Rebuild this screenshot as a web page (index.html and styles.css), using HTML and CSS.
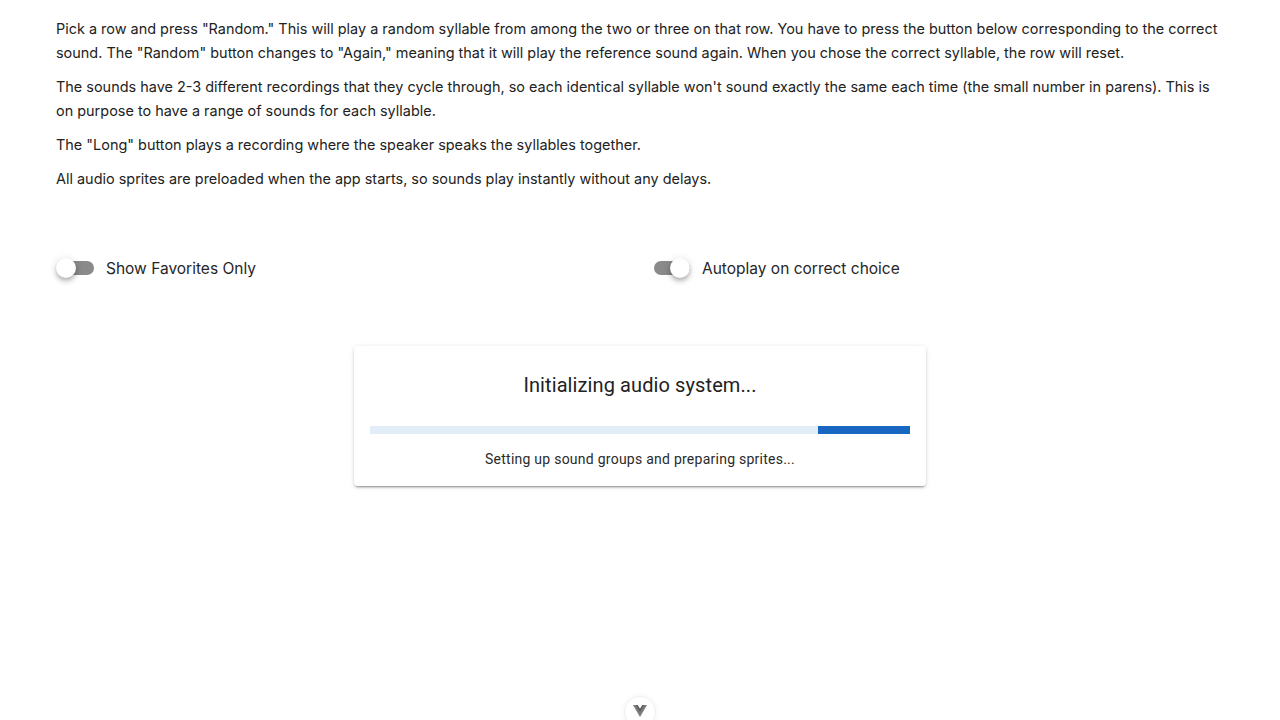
FILE: index.html
```html
<!DOCTYPE html>
<html lang="en">
<head>
<meta charset="utf-8">
<title>Syllables</title>
<link rel="stylesheet" href="styles.css">
</head>
<body>
<main class="page">
  <section class="intro">
    <p>Pick a row and press "Random." This will play a random syllable from among the two or three on that row. You have to press the button below corresponding to the correct sound. The "Random" button changes to "Again," meaning that it will play the reference sound again. When you chose the correct syllable, the row will reset.</p>
    <p>The sounds have 2-3 different recordings that they cycle through, so each identical syllable won't sound exactly the same each time (the small number in parens). This is on purpose to have a range of sounds for each syllable.</p>
    <p>The "Long" button plays a recording where the speaker speaks the syllables together.</p>
    <p>All audio sprites are preloaded when the app starts, so sounds play instantly without any delays.</p>
  </section>

  <section class="toggles">
    <label class="switch">
      <span class="switch-control"><span class="track"></span><span class="thumb"></span></span>
      <span class="switch-label">Show Favorites Only</span>
    </label>
    <label class="switch switch-on second">
      <span class="switch-control"><span class="track"></span><span class="thumb"></span></span>
      <span class="switch-label">Autoplay on correct choice</span>
    </label>
  </section>

  <section class="loader-card">
    <h2 class="loader-title">Initializing audio system...</h2>
    <div class="progress"><div class="progress-fill"></div></div>
    <p class="loader-sub">Setting up sound groups and preparing sprites...</p>
  </section>
</main>

<button class="devtools" type="button" aria-label="Vue devtools">
  <svg width="14" height="12" viewBox="0 0 14 12">
    <path d="M0 0 L4.6 0 L7 4 L9.4 0 L14 0 L7 12 Z" fill="#7c7c7c"/>
    <path d="M3 0 L4.6 0 L7 4 L9.4 0 L11 0 L7 7 Z" fill="#5a5a5a"/>
  </svg>
</button>
</body>
</html>
```

FILE: styles.css
```css
html, body {
  margin: 0;
  padding: 0;
  background: #ffffff;
}

body {
  font-family: Inter, "Noto Sans", "Liberation Sans", sans-serif;
  color: #222222;
  overflow: hidden;
  height: 720px;
}

.page {
  padding: 17px 56px 0;
}

.intro p {
  margin: 0 0 10px;
  font-size: 14.45px;
  line-height: 24px;
}

.toggles {
  display: grid;
  grid-template-columns: 1fr 1fr;
  margin-top: 57px;
  height: 40px;
  align-items: center;
}

.switch {
  display: flex;
  align-items: center;
}

.switch.second {
  padding-left: 12px;
}

.switch-control {
  position: relative;
  width: 38px;
  height: 20px;
  flex: none;
}

.track {
  position: absolute;
  left: 2px;
  right: 0;
  top: 3px;
  height: 14px;
  border-radius: 7px;
  background: #8a8a8a;
}

.thumb {
  position: absolute;
  top: 0;
  left: 0;
  width: 20px;
  height: 20px;
  border-radius: 50%;
  background: #ffffff;
  box-shadow: 0 2px 4px -1px rgba(0,0,0,0.2), 0 4px 5px rgba(0,0,0,0.14), 0 1px 10px rgba(0,0,0,0.12);
}

.switch-on .thumb {
  left: 18px;
}

.switch-label {
  margin-left: 12px;
  font-size: 15.5px;
  color: #262626;
}

.loader-card {
  width: 572px;
  box-sizing: border-box;
  margin: 58px auto 0;
  padding: 25px 16px 17px;
  background: #ffffff;
  border-radius: 4px;
  box-shadow: 0 3px 1px -2px rgba(0,0,0,0.2), 0 2px 2px rgba(0,0,0,0.14), 0 1px 5px rgba(0,0,0,0.12);
  text-align: center;
  font-family: Roboto, "Liberation Sans", sans-serif;
}

.loader-title {
  margin: 0;
  font-size: 20px;
  font-weight: 400;
  line-height: 28px;
  color: #222222;
  letter-spacing: 0.1px;
}

.progress {
  margin-top: 27px;
  height: 8px;
  background: #e3edf7;
  position: relative;
  overflow: hidden;
}

.progress-fill {
  position: absolute;
  top: 0;
  bottom: 0;
  right: 0;
  width: 92px;
  background: #1867c0;
}

.loader-sub {
  margin: 15px 0 0;
  font-size: 14px;
  line-height: 20px;
  letter-spacing: 0.25px;
  color: #2a2a2a;
}

.devtools {
  position: fixed;
  left: 624px;
  top: 696px;
  width: 32px;
  height: 32px;
  padding: 0;
  border: 1px solid #f0f0f0;
  border-radius: 16px;
  background: #ffffff;
  box-shadow: 0 0 6px rgba(0,0,0,0.06);
  display: flex;
  justify-content: center;
  align-items: flex-start;
  padding-top: 8px;
  box-sizing: border-box;
}
```
